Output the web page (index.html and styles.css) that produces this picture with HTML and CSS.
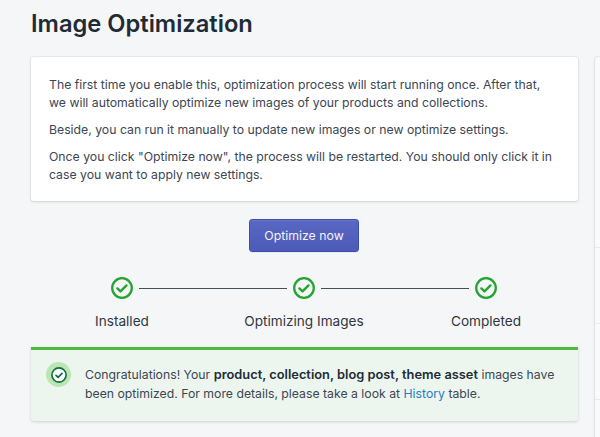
FILE: index.html
```html
<!DOCTYPE html>
<html lang="en">
<head>
<meta charset="utf-8">
<title>Image Optimization</title>
<link rel="stylesheet" href="styles.css">
</head>
<body>
<div class="layout">
  <main class="main">
    <h1 class="title">Image Optimization</h1>
    <section class="card">
      <p class="para">The first time you enable this, optimization process will start running once. After that, we will automatically optimize new images of your products and collections.</p>
      <p class="para">Beside, you can run it manually to update new images or new optimize settings.</p>
      <p class="para">Once you click "Optimize now", the process will be restarted. You should only click it in case you want to apply new settings.</p>
    </section>
    <div class="action"><button class="button" type="button">Optimize now</button></div>
    <div class="steps">
      <div class="step">
        <svg class="step-icon" viewBox="0 0 22 22"><circle cx="11" cy="11" r="9.8" fill="none" stroke="#25a52f" stroke-width="2.3"/><path d="M6.4 11.4l3.1 3 6-6" fill="none" stroke="#25a52f" stroke-width="2.4" stroke-linecap="round" stroke-linejoin="round"/></svg>
        <span class="step-label">Installed</span>
      </div>
      <div class="line"></div>
      <div class="step">
        <svg class="step-icon" viewBox="0 0 22 22"><circle cx="11" cy="11" r="9.8" fill="none" stroke="#25a52f" stroke-width="2.3"/><path d="M6.4 11.4l3.1 3 6-6" fill="none" stroke="#25a52f" stroke-width="2.4" stroke-linecap="round" stroke-linejoin="round"/></svg>
        <span class="step-label">Optimizing Images</span>
      </div>
      <div class="line"></div>
      <div class="step">
        <svg class="step-icon" viewBox="0 0 22 22"><circle cx="11" cy="11" r="9.8" fill="none" stroke="#25a52f" stroke-width="2.3"/><path d="M6.4 11.4l3.1 3 6-6" fill="none" stroke="#25a52f" stroke-width="2.4" stroke-linecap="round" stroke-linejoin="round"/></svg>
        <span class="step-label">Completed</span>
      </div>
    </div>
    <section class="banner">
      <span class="banner-icon">
        <svg viewBox="0 0 16 16" width="16" height="16"><circle cx="8" cy="8" r="7.1" fill="#fff" stroke="#0d6b3f" stroke-width="1.6"/><path d="M5 8.3l2.1 2 3.9-3.9" fill="none" stroke="#0d6b3f" stroke-width="1.7" stroke-linecap="round" stroke-linejoin="round"/></svg>
      </span>
      <p class="banner-text">Congratulations! Your <strong class="strong">product, collection, blog post, theme asset</strong> images have been optimized. For more details, please take a look at <a class="link" href="#">History</a> table.</p>
    </section>
  </main>
  <aside class="side">
    <div class="side-row"></div>
    <div class="side-row"></div>
    <div class="side-row"></div>
  </aside>
</div>
</body>
</html>
```
FILE: styles.css
```css
* { box-sizing: border-box; }
html, body { margin: 0; height: 437px; overflow: hidden; }
body {
  background: #f4f6f8;
  color: #3c4654;
  font-family: Inter, "Noto Sans", sans-serif;
  font-size: 12.25px;
  line-height: 18px;
}
.layout { display: flex; align-items: flex-start; padding-left: 31px; }
.main { width: 547px; flex: none; }
.title {
  margin: 0;
  padding-top: 8px;
  height: 57px;
  font-size: 23.7px;
  line-height: 32px;
  font-weight: 600;
  color: #212b36;
}
.card {
  height: 144px;
  padding: 19px 18px 0;
  background: #fff;
  border-radius: 3px;
  box-shadow: 0 0 0 1px rgba(63,63,68,.05), 0 1px 3px rgba(63,63,68,.15);
}
.para { margin: 0 0 9px; }
.action { display: flex; justify-content: center; padding: 18px 1px 0 0; }
.button {
  width: 110px;
  height: 33px;
  padding: 0;
  border: 1px solid #3f4eae;
  border-radius: 3px;
  background: linear-gradient(#5a68c4, #4c5ab8);
  box-shadow: inset 0 1px 0 #6774c8, 0 1px 0 rgba(22,29,37,.05);
  color: #f2f3fb;
  font: inherit;
  font-size: 12.3px;
}
.steps { display: flex; align-items: flex-start; justify-content: center; padding: 25px 1px 0 0; height: 95px; }
.step { width: 34px; display: flex; flex-direction: column; align-items: center; position: relative; }
.step-icon { width: 22px; height: 22px; display: block; }
.step-label {
  margin-top: 12px;
  white-space: nowrap;
  font-size: 13.6px;
  line-height: 20px;
  color: #2f3740;
}
.line { width: 148px; height: 1px; margin-top: 11px; background: #454f5b; }
.banner {
  display: flex;
  gap: 14px;
  height: 74px;
  padding: 12px 18px 0 15px;
  background: #edf6ee;
  border-top: 3px solid #50b83c;
  border-radius: 0 0 3px 3px;
  box-shadow: 0 1px 3px rgba(63,63,68,.2);
}
.banner-icon {
  flex: none;
  display: flex;
  align-items: center;
  justify-content: center;
  width: 25px;
  height: 25px;
  border-radius: 50%;
  background: #bbe5b3;
}
.banner-text { margin: 0; line-height: 19px; padding-top: 3px; }
.strong { font-weight: 600; font-size: 12.85px; color: #212b36; }
.link { color: #2c7cc0; text-decoration: none; }
.side {
  flex: none;
  width: 5px;
  margin: 57px 0 0 17px;
  height: 380px;
  background: #f9fafb;
  box-shadow: 0 0 0 1px rgba(63,63,68,.05), 0 1px 3px rgba(63,63,68,.15);
  border-radius: 3px 0 0 0;
}
.side-row { border-bottom: 1px solid #e8eaec; height: 191px; }
.side-row + .side-row { height: 76px; }
```
